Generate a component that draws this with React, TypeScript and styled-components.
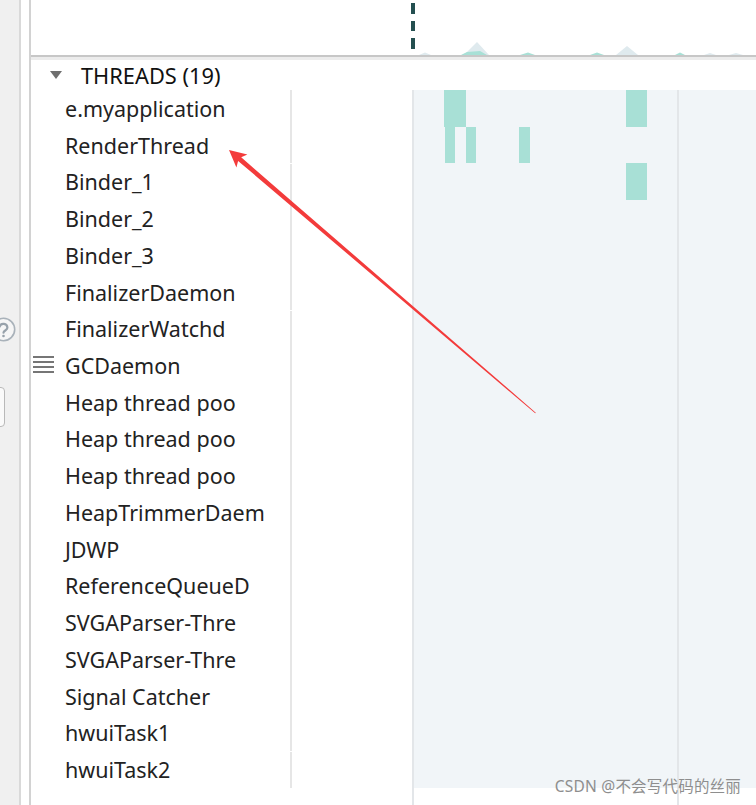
import React from "react";
import styled, { createGlobalStyle } from "styled-components";

const Global = createGlobalStyle`
  html, body { margin: 0; padding: 0; background: #fff; overflow: hidden; }
  body { font-family: "Noto Sans", "Open Sans", sans-serif; }
`;

const ROW_H = "calc(698px / 19)";
const TRACK_BG = "#f1f5f8";
const BAR = "#a8e0d6";

const Page = styled.div`
  position: relative;
  width: 756px;
  height: 805px;
  display: flex;
  overflow: hidden;
`;

const SideStrip = styled.div`
  width: 19px;
  flex: none;
  background: #f0f0f0;
  border-right: 2px solid #d9d9d9;
  padding-top: 317px;
  display: flex;
  flex-direction: column;
  overflow: hidden;
`;

const HelpIcon = styled.svg`
  display: block;
  flex: none;
  margin-left: -9px;
`;

const SideBox = styled.div`
  width: 20px;
  height: 38px;
  flex: none;
  margin-top: 45px;
  margin-left: -17px;
  border: 1.5px solid #b9b9b9;
  border-radius: 4px;
  background: #fafafa;
`;

const Gutter = styled.div`
  width: 8px;
  flex: none;
  background: #fff;
  border-right: 2px solid #d2d2d2;
`;

const Main = styled.div`
  flex: 1;
  display: flex;
  flex-direction: column;
  min-width: 0;
`;

const Overview = styled.div`
  height: 55px;
  flex: none;
  border-bottom: 2px solid #c7c7c7;
  box-shadow: 0 3px 0 #ececec;
`;

const OverviewSvg = styled.svg`
  display: block;
`;

const Header = styled.div`
  height: 30px;
  margin-top: 3px;
  flex: none;
  display: flex;
  align-items: center;
  padding-left: 19px;
  gap: 19px;
  font-size: 21.8px;
  color: #111;
`;

const Caret = styled.span`
  width: 0;
  height: 0;
  border-left: 6.5px solid transparent;
  border-right: 6.5px solid transparent;
  border-top: 8px solid #6f6f6f;
`;

const Body = styled.div`
  flex: 1;
  display: flex;
  align-items: flex-start;
`;

const Labels = styled.div`
  width: 259px;
  flex: none;
  display: grid;
  grid-auto-rows: ${ROW_H};
`;

const Row = styled.div`
  display: flex;
  align-items: center;
  font-size: 21.5px;
  color: #222;
  white-space: nowrap;
  overflow: hidden;
`;

const HandleSlot = styled.div`
  width: 34px;
  flex: none;
  padding-left: 2px;
  box-sizing: border-box;
  display: flex;
  align-items: center;
`;

const Handle = styled.div`
  width: 21px;
  height: 17px;
  margin-top: -2px;
  background: repeating-linear-gradient(
    to bottom,
    #767676 0 2px,
    transparent 2px 5px
  );
`;

const DividerCol = styled.div`
  width: 2px;
  flex: none;
  display: flex;
  flex-direction: column;
`;

const Segment = styled.div<{ $rows: number; $first?: boolean }>`
  height: calc(${ROW_H} * ${(p) => p.$rows} - ${(p) => (p.$first ? 0 : 1)}px);
  margin-top: ${(p) => (p.$first ? 0 : 1)}px;
  background: #e6e6e6;
`;

const Spacer = styled.div`
  width: 120px;
  flex: none;
`;

const Track = styled.div`
  flex: 1;
  align-self: stretch;
  border-left: 2px solid #e3e6e9;
  display: flex;
`;

const Pane = styled.div<{ $width?: number }>`
  ${(p) => (p.$width ? `width: ${p.$width}px; flex: none;` : "flex: 1;")}
  background: linear-gradient(${TRACK_BG}, ${TRACK_BG}) no-repeat top left / 100% 698px;
  display: grid;
  grid-auto-rows: ${ROW_H};
  align-content: start;
`;

const GridLine = styled.div`
  width: 2px;
  flex: none;
  background: #e3e6e9;
`;

const Lane = styled.div`
  position: relative;
`;

const Bar = styled.div`
  position: absolute;
  top: 0;
  bottom: 0;
  background: ${BAR};
`;

const Arrow = styled.svg`
  position: absolute;
  left: 0;
  top: 0;
  pointer-events: none;
`;

const Watermark = styled.div`
  position: absolute;
  right: 15px;
  bottom: 8px;
  font-family: "Noto Sans", "Noto Sans CJK SC", sans-serif;
  font-size: 15.5px;
  color: #8e8e8e;
  letter-spacing: 0.2px;
`;

const threads = [
  "e.myapplication",
  "RenderThread",
  "Binder_1",
  "Binder_2",
  "Binder_3",
  "FinalizerDaemon",
  "FinalizerWatchd",
  "GCDaemon",
  "Heap thread poo",
  "Heap thread poo",
  "Heap thread poo",
  "HeapTrimmerDaem",
  "JDWP",
  "ReferenceQueueD",
  "SVGAParser-Thre",
  "SVGAParser-Thre",
  "Signal Catcher",
  "hwuiTask1",
  "hwuiTask2",
];

const bars: { left: number; width: number }[][] = [
  [
    { left: 30, width: 22 },
    { left: 212, width: 21 },
  ],
  [
    { left: 31, width: 10 },
    { left: 52, width: 10 },
    { left: 105, width: 11 },
  ],
  [{ left: 212, width: 21 }],
];

// arrow geometry (page coords)
const tip = [229, 150];
const tail = [535.5, 413];
const arrowPoints = (() => {
  const dx = tip[0] - tail[0];
  const dy = tip[1] - tail[1];
  const len = Math.hypot(dx, dy);
  const ux = dx / len;
  const uy = dy / len;
  const nx = -uy;
  const ny = ux;
  const base = [tip[0] - ux * 17, tip[1] - uy * 17];
  const neck = [tip[0] - ux * 14, tip[1] - uy * 14];
  const pts = [
    tip,
    [base[0] + nx * 8.5, base[1] + ny * 8.5],
    [neck[0] + nx * 2.4, neck[1] + ny * 2.4],
    [tail[0] + nx * 0.4, tail[1] + ny * 0.4],
    [tail[0] - nx * 0.4, tail[1] - ny * 0.4],
    [neck[0] - nx * 2.4, neck[1] - ny * 2.4],
    [base[0] - nx * 8.5, base[1] - ny * 8.5],
  ];
  return pts.map((p) => `${p[0].toFixed(1)},${p[1].toFixed(1)}`).join(" ");
})();

export default function App() {
  return (
    <Page>
      <Global />
      <SideStrip>
        <HelpIcon width={25} height={25} viewBox="0 0 25 25">
          <circle cx={12.5} cy={12.5} r={11.2} fill="#f6f6f6" stroke="#a9b2ba" strokeWidth={1.6} />
          <path
            d="M8.6 9.6a4 4 0 0 1 7.8 1.1c0 2.5-3.9 3-3.9 5"
            fill="none"
            stroke="#98a2ab"
            strokeWidth={2.2}
            strokeLinecap="round"
          />
          <circle cx={12.5} cy={19} r={1.3} fill="#98a2ab" />
        </HelpIcon>
        <SideBox />
      </SideStrip>
      <Gutter />
      <Main>
        <Overview>
          <OverviewSvg width={725} height={55} viewBox="31 0 725 55">
            <g fill="#dfeaee">
              <polygon points="419,55 425,52.5 431,55" />
              <polygon points="464,55 477,42 489,55" />
              <polygon points="616,55 627,46 638,55" />
              <polygon points="704,55 710,53 716,55" />
              <polygon points="729,55 736,53 743,55" />
            </g>
            <g fill={BAR}>
              <polygon points="461,55 467,52 480,51 487,55" />
              <polygon points="520,55 528,52.5 535,55" />
              <polygon points="590,55 597,52.5 604,55" />
              <polygon points="675,55 680,52.5 685,55" />
            </g>
            <g fill="#244f50">
              <rect x={411} y={3} width={4} height={11} />
              <rect x={411} y={21} width={4} height={10} />
              <rect x={411} y={38} width={4} height={11} />
            </g>
          </OverviewSvg>
        </Overview>
        <Header>
          <Caret />
          <span>THREADS (19)</span>
        </Header>
        <Body>
          <Labels>
            {threads.map((t, i) => (
              <Row key={i}>
                <HandleSlot>{t === "GCDaemon" && <Handle />}</HandleSlot>
                {t}
              </Row>
            ))}
          </Labels>
          <DividerCol>
            <Segment $rows={2} $first />
            <Segment $rows={4} />
            <Segment $rows={12} />
            <Segment $rows={1} />
          </DividerCol>
          <Spacer />
          <Track>
            <Pane $width={263}>
              {threads.map((_, i) => (
                <Lane key={i}>
                  {(bars[i] || []).map((b, j) => (
                    <Bar key={j} style={{ left: b.left, width: b.width }} />
                  ))}
                </Lane>
              ))}
            </Pane>
            <GridLine />
            <Pane />
          </Track>
        </Body>
      </Main>
      <Arrow width={756} height={805} viewBox="0 0 756 805">
        <polygon points={arrowPoints} fill="#f33b3b" />
      </Arrow>
      <Watermark>CSDN @不会写代码的丝丽</Watermark>
    </Page>
  );
}
